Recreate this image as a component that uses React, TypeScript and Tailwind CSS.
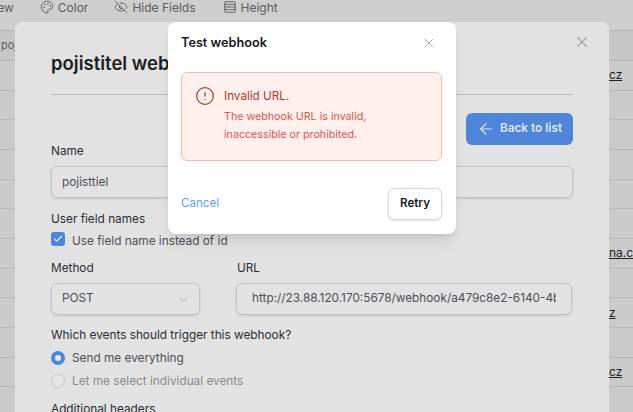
import React from 'react';
import { Palette, EyeOff, Rows4, X, ArrowLeft, ChevronDown, Check, CircleAlert } from 'lucide-react';

const rows = [
    { id: 1, mail: 'cz', left: 'ml-[609px]' },
    { id: 2, mail: '', left: '' },
    { id: 3, mail: '', left: '' },
    { id: 4, mail: '', left: '' },
    { id: 5, mail: '', left: '' },
    { id: 6, mail: '', left: '' },
    { id: 7, mail: 'na.cz', left: 'ml-[609px]' },
    { id: 8, mail: '', left: '' },
    { id: 9, mail: 'z', left: 'ml-[609px]' },
    { id: 10, mail: '', left: '' },
    { id: 11, mail: 'cz', left: 'ml-[609px]' },
    { id: 12, mail: '', left: '' },
];

const Background: React.FC = () => (
    <div className="h-full bg-[#cecece]">
        {/* Toolbar */}
        <div className="h-[31px] flex items-start text-[12px] leading-[15px] text-[#5c5c5c] border-b border-[#b4b4b4] whitespace-nowrap">
            <span className="ml-[-14px]">View</span>
            <Palette className="w-[14px] h-[14px] ml-[26px] mr-[4px]" strokeWidth={1.5} />
            <span>Color</span>
            <EyeOff className="w-[14px] h-[14px] ml-[26px] mr-[4px]" strokeWidth={1.5} />
            <span>Hide Fields</span>
            <Rows4 className="w-[14px] h-[14px] ml-[27px] mr-[4px]" strokeWidth={1.5} />
            <span>Height</span>
        </div>
        {/* Grid header */}
        <div className="h-[30px] bg-[#c6c6c6] border-b border-[#b4b4b4] flex items-center text-[11px] text-[#5c5c5c] overflow-hidden whitespace-nowrap">
            <span className="ml-[1px]">poj</span>
        </div>
        {rows.map((row) => (
            <div key={row.id} className="h-[29.67px] bg-[#cacaca] border-b border-[#b9b9b9] flex items-center text-[12px] text-[#222222] overflow-hidden whitespace-nowrap">
                {row.mail && <span className={`underline ${row.left}`}>{row.mail}</span>}
            </div>
        ))}
    </div>
);

const WebhookForm: React.FC = () => (
    <div className="absolute left-[15px] top-[22px] w-[594px] h-[420px] bg-[#e2e2e2] rounded-lg pl-9 pr-9 pt-[27px] text-[11.8px] text-[#2b2d33]">
        <X className="absolute right-[18px] top-[11px] w-[18px] h-[18px] text-[#a3a3a3]" strokeWidth={1.5} />
        <h2 className="text-[18.5px] leading-[28px] font-semibold text-[#1c1e24] whitespace-nowrap">pojistitel webhook</h2>
        <div className="mt-[17px] border-t border-[#bdbdbd]" />
        <div className="mt-[18px] flex justify-end">
            <button className="w-[107px] h-[32px] bg-[#4f86da] rounded-md flex items-center justify-center gap-[5px] text-[11.8px] font-semibold text-[#dfe7f5]">
                <ArrowLeft className="w-[18px] h-[18px]" strokeWidth={1.5} />
                Back to list
            </button>
        </div>
        <div className="mt-[-2px] leading-[16px]">Name</div>
        <div className="mt-[7px] h-[32px] border border-[#c4c4c4] rounded-md flex items-center px-[10px] pt-[1px] text-[#4d4f55] shadow-sm">pojisttiel</div>
        <div className="mt-[13px] leading-[16px]">User field names</div>
        <div className="mt-[5px] flex items-start gap-[7px] leading-[16px] text-[#4d4f55]">
            <span className="w-[14px] h-[14px] rounded-[3px] bg-[#4f86da] flex items-center justify-center">
                <Check className="w-[10px] h-[10px] text-[#e6ecf7]" strokeWidth={3} />
            </span>
            <span className="mt-[0.5px]">Use field name instead of id</span>
        </div>
        <div className="mt-[11px] flex gap-[37px]">
            <div className="w-[149px] shrink-0">
                <div className="leading-[16px]">Method</div>
                <div className="mt-[7px] h-[32px] border border-[#c4c4c4] rounded-md flex items-center justify-between pl-[10px] pr-[8px] pt-[1px] text-[#4d4f55] shadow-sm">
                    POST
                    <ChevronDown className="w-[15px] h-[15px] text-[#a8a8a8]" strokeWidth={1.5} />
                </div>
            </div>
            <div className="w-[336px] -ml-[1px]">
                <div className="leading-[16px] ml-[1px]">URL</div>
                <div className="mt-[7px] h-[32px] border border-[#c4c4c4] rounded-md flex items-center pl-[15px] pr-[15px] pt-[1px] text-[#4d4f55] shadow-sm">
                    <span className="overflow-hidden whitespace-nowrap">http://23.88.120.170:5678/webhook/a479c8e2-6140-4bc1-9d7e-55a1c2f0</span>
                </div>
            </div>
        </div>
        <div className="mt-[12px] leading-[16px]">Which events should trigger this webhook?</div>
        <div className="mt-[7px] flex items-center gap-[7px] leading-[16px] text-[#4d4f55]">
            <span className="w-[14px] h-[14px] rounded-full bg-[#4f86da] flex items-center justify-center">
                <span className="w-[6px] h-[6px] rounded-full bg-[#e6ecf7]" />
            </span>
            Send me everything
        </div>
        <div className="mt-[7px] flex items-center gap-[7px] leading-[16px] text-[#8a8a8a]">
            <span className="w-[14px] h-[14px] rounded-full border border-[#c4c4c4] bg-[#e4e4e4]" />
            Let me select individual events
        </div>
        <div className="mt-[12px] leading-[16px]">Additional headers</div>
    </div>
);

const TestDialog: React.FC = () => (
    <div className="absolute left-[168px] top-[22px] w-[288px] h-[212px] bg-white rounded-lg shadow-lg pl-[13px] pr-[14px] pt-[12px]">
        <div className="flex items-center justify-between h-[17px]">
            <h3 className="text-[12.7px] font-semibold text-[#17181c]">Test webhook</h3>
            <X className="w-[16px] h-[16px] mr-[5px] text-[#b3b3b3]" strokeWidth={1.5} />
        </div>
        <div className="mt-[21px] h-[89px] bg-[#fff0ee] border border-[#ffb7ae] rounded-md flex gap-[9px] pl-[13px] pt-[13px]">
            <CircleAlert className="w-[20px] h-[20px] shrink-0 text-[#b33a30]" strokeWidth={1.5} />
            <div>
                <div className="mt-[2px] text-[11.7px] leading-[17px] text-[#b33a30]">Invalid URL.</div>
                <p className="mt-[3px] text-[10.7px] leading-[18px] text-[#d9564c]">
                    The webhook URL is invalid,<br />inaccessible or prohibited.
                </p>
            </div>
        </div>
        <div className="mt-[27px] flex items-center justify-between">
            <span className="text-[11.6px] text-[#5c9dff]">Cancel</span>
            <button className="w-[54px] h-[32px] bg-white border border-[#d9d9d9] rounded-md shadow-sm text-[11.6px] font-semibold text-[#17181c]">Retry</button>
        </div>
    </div>
);

export default function App() {
    return (
        <div className="relative w-[633px] h-[412px] overflow-hidden font-['Inter',sans-serif]">
            <Background />
            <WebhookForm />
            <TestDialog />
        </div>
    );
}
